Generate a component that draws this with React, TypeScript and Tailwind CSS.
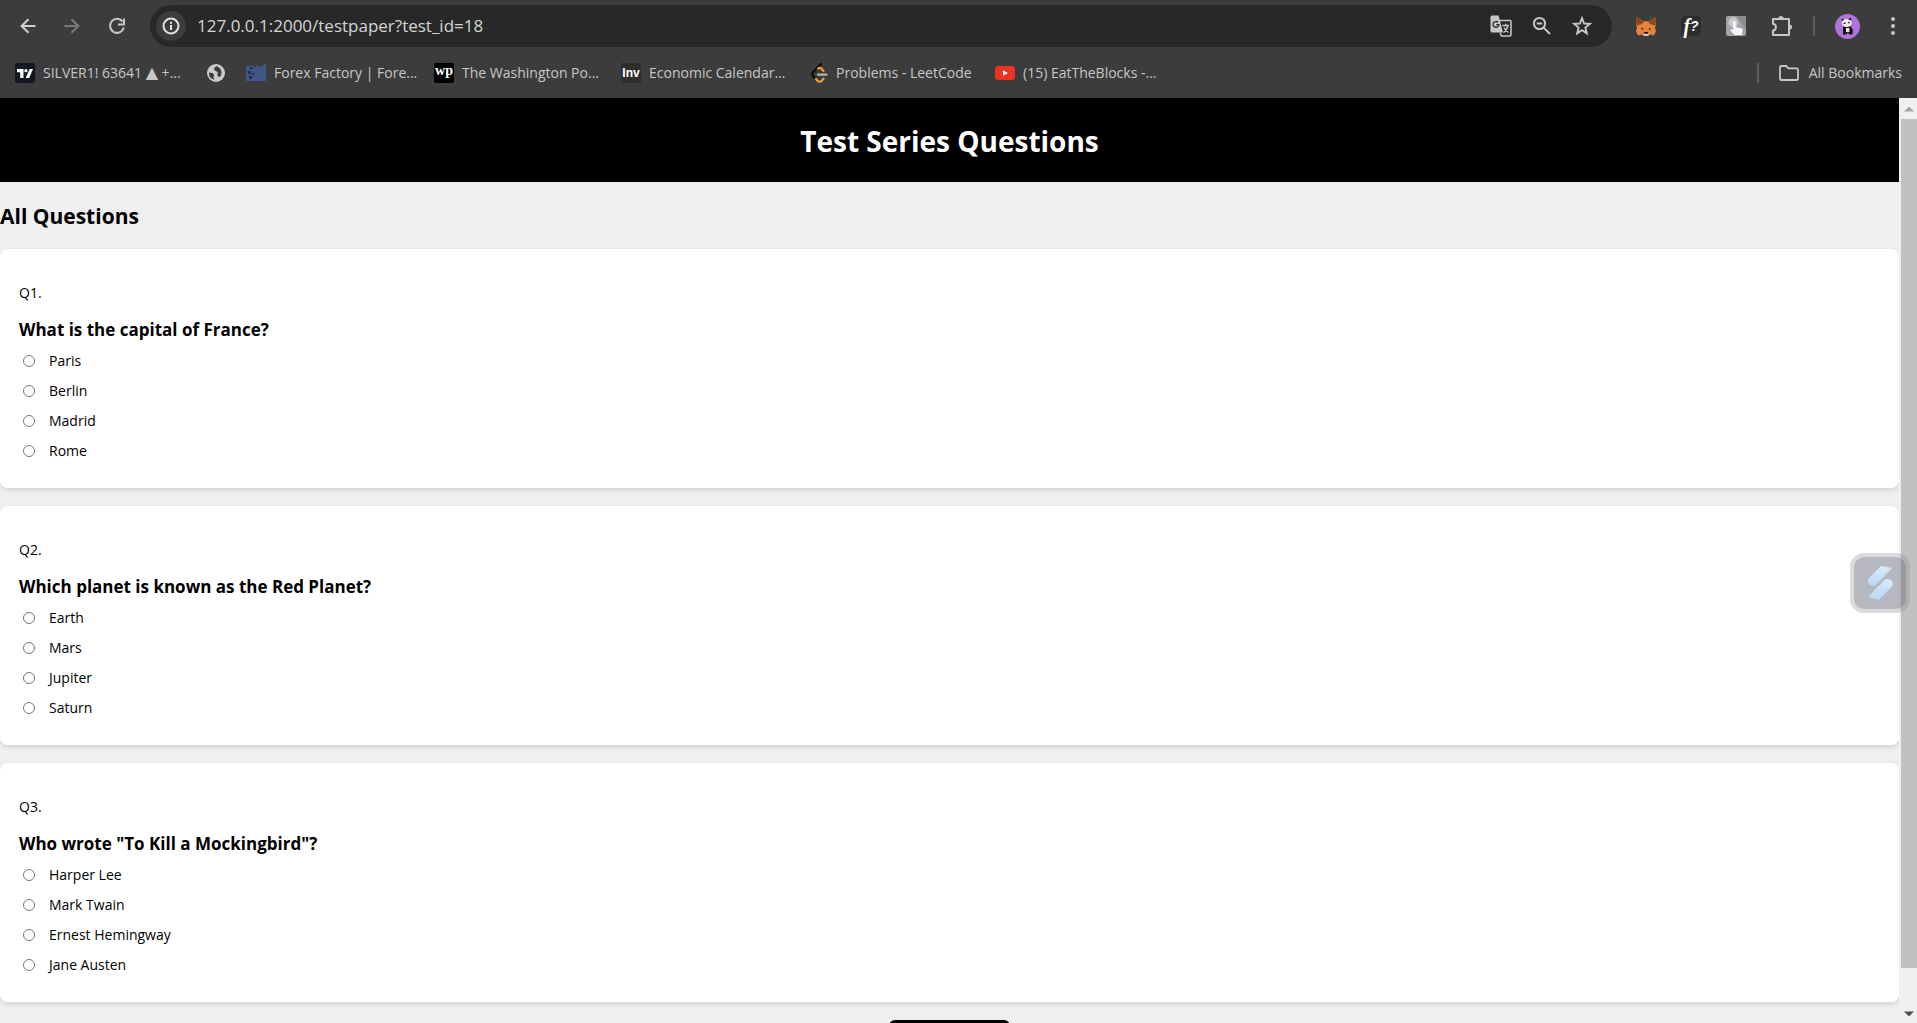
import React from "react";

const questions = [
  { text: "What is the capital of France?", options: ["Paris", "Berlin", "Madrid", "Rome"] },
  { text: "Which planet is known as the Red Planet?", options: ["Earth", "Mars", "Jupiter", "Saturn"] },
  {
    text: 'Who wrote "To Kill a Mockingbird"?',
    options: ["Harper Lee", "Mark Twain", "Ernest Hemingway", "Jane Austen"],
  },
];

const iconBase = { fill: "none", stroke: "currentColor", strokeWidth: 2 } as const;

function ArrowIcon({ flip }: { flip?: boolean }) {
  return (
    <svg width="16" height="16" viewBox="0 0 16 16" {...iconBase} className={flip ? "rotate-180" : ""}>
      <path d="M15.5 8H2M8.5 1.2 1.6 8l6.9 6.8" />
    </svg>
  );
}

function ReloadIcon() {
  return (
    <svg width="18" height="18" viewBox="0 0 18 18" {...iconBase}>
      <path d="M14.6 4.6A7 7 0 1 0 15.8 10.6" />
      <path d="M16 1.4v6h-6" />
    </svg>
  );
}

function InfoIcon() {
  return (
    <svg width="18" height="18" viewBox="0 0 18 18" {...iconBase}>
      <circle cx="9" cy="9" r="7.5" />
      <path d="M9 8v5M9 4.8v2" />
    </svg>
  );
}

function TranslateIcon() {
  return (
    <svg width="22" height="22" viewBox="0 0 22 22" fill="none">
      <path d="M9 5.500h11a1 1 0 0 1 1 1V20a1 1 0 0 1-1 1h-8.500l-1.500-3.500" stroke="#c7c7c7" strokeWidth="1.500" />
      <path d="M2 .5h6.600L13 17.500H2A1.500 1.500 0 0 1 .5 16V2A1.500 1.500 0 0 1 2 .5z" fill="#c7c7c7" />
      <path d="M8 7.300A2.900 2.900 0 1 0 8.900 9.600H6.200" stroke="#282828" strokeWidth="1.300" />
      <path d="M12.300 10.500H19M15.700 8.800v1.700M18 10.500c-.6 3-2.400 5.500-4.500 7M14 12.500c.8 2.200 2.500 4 4.500 5" stroke="#c7c7c7" strokeWidth="1.300" />
    </svg>
  );
}

function ZoomOutIcon() {
  return (
    <svg width="20" height="20" viewBox="0 0 20 20" {...iconBase}>
      <circle cx="7.500" cy="7.500" r="5.600" />
      <path d="M11.600 11.600 18 18M4.700 7.500h5.600" />
    </svg>
  );
}

function StarIcon() {
  return (
    <svg width="20" height="20" viewBox="0 0 20 20" {...iconBase} strokeWidth="1.900">
      <path d="m10 2.200 2.100 5.300 5.700.4-4.400 3.700 1.400 5.700-4.800-3.100-4.800 3.100 1.400-5.700L2.200 7.900l5.700-.4z" />
    </svg>
  );
}

function FoxIcon() {
  return (
    <svg width="20" height="19" viewBox="0 0 20 19">
      <path d="M0 0 7.500 4.200h5L20 0v6l-1 5 1 3-2 4.500-4-1-2 1.500H8l-2-1.500-4 1L0 14l1-3L0 6z" fill="#e8833a" />
      <path d="M0 0 8 4.500 6 7 1 8.500 0 5zM20 0l-8 4.500L14 7l5 1.500L20 5z" fill="#8a4b20" />
      <path d="M5 10.500 8 12l-2 1zM15 10.500 12 12l2 1z" fill="#2b3544" />
      <path d="M7.500 15.500h5l.6 2-1.600 1.500h-3l-1.600-1.500z" fill="#d9c7b8" />
      <path d="M8 15h4l.4 1.700H7.600z" fill="#1d1d1d" />
    </svg>
  );
}

function FunctionIcon() {
  return (
    <span className="flex size-5 items-center justify-center rounded-sm bg-[#2d2d2d] font-['Liberation_Serif',serif] text-xl leading-5 font-bold text-white italic">
      f<span className="font-['Liberation_Sans',sans-serif] text-sm leading-5">?</span>
    </span>
  );
}

function TouchIcon() {
  return (
    <svg width="20" height="20" viewBox="0 0 20 20">
      <rect width="20" height="20" rx="2" fill="#a3a3a3" />
      <path d="M10 0h8a2 2 0 0 1 2 2v12z" fill="#8d8d8d" />
      <circle cx="7.500" cy="6.500" r="5" fill="#c9c9c9" />
      <path d="M7 6.500a1.400 1.400 0 0 1 2.800 0V11l5.200 1.200c1.300.3 1.800 1 1.600 2.200L16 19H8.500L4 14.200c.5-1.500 1.800-1.300 3 0z" fill="#f1f6fc" />
    </svg>
  );
}

function PuzzleIcon() {
  return (
    <svg width="22" height="22" viewBox="0 0 22 22" {...iconBase}>
      <path d="M2 4h16v16H2v-4.400c3.800-.4 3.800-6.400 0-6.800z" strokeLinejoin="round" />
      <path d="M7.400 3.600a2.600 2.600 0 0 1 5.200 0zM18.400 9.400a2.600 2.600 0 0 1 0 5.200z" fill="currentColor" stroke="none" />
    </svg>
  );
}

function AvatarIcon() {
  return (
    <svg width="25" height="25" viewBox="0 0 25 25">
      <circle cx="12.500" cy="12.500" r="12.500" fill="#b073dc" />
      <path d="M8 12.500h8l2 4-.5 4h-3.500l-1-2.500-1.500 2.500H8z" fill="#151515" />
      <circle cx="7.800" cy="6" r="1.300" fill="#151515" />
      <circle cx="15" cy="5.300" r="1.300" fill="#151515" />
      <ellipse cx="11.700" cy="9" rx="5" ry="4" fill="#f2f2f2" />
      <path d="M8.500 9.700l2-1M13 8.500l2 .5" stroke="#151515" strokeWidth="1.200" />
      <rect x="11" y="14" width="3.400" height="4" fill="#e8e8e8" />
    </svg>
  );
}

function TradingViewIcon() {
  return (
    <svg width="20" height="20" viewBox="0 0 20 20">
      <rect width="20" height="20" rx="3" fill="#131722" />
      <path d="M2 6h6.500v9H5.200V9.300H2z" fill="#fff" />
      <circle cx="10.900" cy="7.700" r="1.600" fill="#fff" />
      <path d="M14.600 6H18l-3.800 9h-3.500z" fill="#fff" />
    </svg>
  );
}

function GlobeIcon() {
  return (
    <svg width="18" height="18" viewBox="0 0 18 18">
      <circle cx="9" cy="9" r="9" fill="#c9cacc" />
      <path d="M10 2.200C8 2.500 6.800 4 7.200 5.500c.4 1.800 3 1.500 3.500 3 .4 1.200-.7 2-.2 3.200.4.900 1.700.6 2.500 1.300A7 7 0 0 0 10 2.200zM2 8.500c2 .1 4.500.4 5 2 .4 1.300-.8 1.800-.5 3 .2.800.8 1.300.7 2.200A7 7 0 0 1 2 8.500z" fill="#3c3c3c" />
    </svg>
  );
}

function FactoryIcon() {
  return (
    <svg width="20" height="17" viewBox="0 0 20 17">
      <path d="M0 2h8v2l5-3v3l6-4h1v17H0z" fill="#3f5788" />
      <path d="M4 3h3v2H4zM2 7h3v3H2zM6 9h2v2H6zM3 12h3v3H3z" fill="#22314f" />
    </svg>
  );
}

function WapoIcon() {
  return (
    <span className="flex size-5 items-center justify-center overflow-hidden rounded-xs bg-black pb-1 font-['Liberation_Serif',serif] text-sm leading-5 font-bold text-white">
      wp
    </span>
  );
}

function InvIcon() {
  return (
    <span className="flex size-5 items-center justify-center bg-[#2e2e2e] font-['Liberation_Sans',sans-serif] text-xs leading-5 font-bold text-white">
      Inv
    </span>
  );
}

function LeetCodeIcon() {
  return (
    <svg width="18" height="20" viewBox="0 0 18 20" fill="none" strokeWidth="2.200" strokeLinecap="round">
      <path d="M11 1 3 9.300c-1 1-1 2.700 0 3.700l3 3" stroke="#0d0d0d" />
      <path d="M8 5.500c1-.8 2.500-.8 3.500.2L13.500 8M6 16l1.500 1.700c1.200 1.200 3 1.200 4.200 0l1.800-2" stroke="#f0a22e" />
      <path d="M8 11.700h8.500" stroke="#b5b5b5" />
    </svg>
  );
}

function YouTubeIcon() {
  return (
    <svg width="20" height="14" viewBox="0 0 20 14">
      <rect width="20" height="14" rx="3.500" fill="#ea3323" />
      <path d="M8 4.200v5.600L13 7z" fill="#fff" />
    </svg>
  );
}

function FolderIcon() {
  return (
    <svg width="20" height="16" viewBox="0 0 20 16" {...iconBase} strokeWidth="1.800">
      <path d="M1 2.200A1.200 1.200 0 0 1 2.200 1h5l2 2.300h8.600A1.200 1.200 0 0 1 19 4.500v9.300a1.200 1.200 0 0 1-1.200 1.200H2.200A1.200 1.200 0 0 1 1 13.800z" />
    </svg>
  );
}

const tickerLabel = (
  <>
    SILVER1! 63641 <span className="font-['DejaVu_Sans',sans-serif] text-base leading-5">▲</span> +...
  </>
);

const bookmarks = [
  { name: "Silver ticker", label: tickerLabel, icon: <TradingViewIcon />, width: "w-[172px]" },
  { name: "Website", label: null, icon: <GlobeIcon />, width: "w-[19px]" },
  { name: "Forex Factory", label: "Forex Factory | Fore...", icon: <FactoryIcon />, width: "w-[168px]" },
  { name: "The Washington Post", label: "The Washington Po...", icon: <WapoIcon />, width: "w-[167px]" },
  { name: "Economic Calendar", label: "Economic Calendar...", icon: <InvIcon />, width: "w-[169px]" },
  { name: "LeetCode", label: "Problems - LeetCode", icon: <LeetCodeIcon />, width: "w-[165px]" },
  { name: "EatTheBlocks", label: "(15) EatTheBlocks -...", icon: <YouTubeIcon />, width: "w-[167px]" },
];

function BrowserChrome() {
  return (
    <div className="flex h-[98px] shrink-0 flex-col bg-[#3c3c3c] pt-[5px] text-[#c7c7c7]">
      <div className="flex h-[42px] items-center">
        <div className="flex w-[150px] shrink-0 items-center gap-7 pl-5">
          <button type="button" aria-label="Back" className="text-[#d0d0d0]"><ArrowIcon /></button>
          <button type="button" aria-label="Forward" className="text-[#7c7c7c]"><ArrowIcon flip /></button>
          <button type="button" aria-label="Reload"><ReloadIcon /></button>
        </div>
        <div className="flex h-full min-w-0 flex-1 items-center rounded-full bg-[#282828] pr-[20px] pl-[6px]">
          <button type="button" aria-label="Site information" className="flex size-[30px] shrink-0 items-center justify-center rounded-full bg-[#3c3c3c] text-[#e3e3e3]">
            <InfoIcon />
          </button>
          <input
            aria-label="Address"
            defaultValue="127.0.0.1:2000/testpaper?test_id=18"
            className="ml-[11px] min-w-0 flex-1 bg-transparent text-[17px] text-[#d5d5d5] outline-none"
          />
          <div className="flex items-center gap-5">
            <button type="button" aria-label="Translate"><TranslateIcon /></button>
            <button type="button" aria-label="Zoom"><ZoomOutIcon /></button>
            <button type="button" aria-label="Bookmark this page"><StarIcon /></button>
          </div>
        </div>
        <div className="flex shrink-0 items-center gap-5 pr-[14px] pl-6">
          <div className="flex items-center gap-[25px]">
            <button type="button" aria-label="MetaMask"><FoxIcon /></button>
            <button type="button" aria-label="Formula finder"><FunctionIcon /></button>
            <button type="button" aria-label="Click helper"><TouchIcon /></button>
            <button type="button" aria-label="Extensions"><PuzzleIcon /></button>
          </div>
          <div className="h-5 w-[2px] bg-[#5c5c5c]" />
          <div className="flex items-center gap-[23px]">
            <button type="button" aria-label="Profile"><AvatarIcon /></button>
            <button type="button" aria-label="Menu" className="flex w-5 flex-col items-center gap-[3px]">
              <span className="size-1 rounded-full bg-[#c7c7c7]" />
              <span className="size-1 rounded-full bg-[#c7c7c7]" />
              <span className="size-1 rounded-full bg-[#c7c7c7]" />
            </button>
          </div>
        </div>
      </div>
      <div className="flex flex-1 items-center px-[15px] text-sm">
        <nav className="flex items-center gap-5">
          {bookmarks.map((b) => (
            <a key={b.name} href="#" aria-label={b.name} className={`flex shrink-0 items-center gap-2 whitespace-nowrap ${b.width}`}>
              <span className="shrink-0">{b.icon}</span>
              {b.label && <span>{b.label}</span>}
            </a>
          ))}
        </nav>
        <div className="ml-auto flex items-center">
          <div className="mr-5 h-5 w-[2px] bg-[#5c5c5c]" />
          <button type="button" className="flex items-center gap-[10px] whitespace-nowrap"><FolderIcon />All Bookmarks</button>
        </div>
      </div>
    </div>
  );
}

function QuestionCard({ index, text, options }: { index: number; text: string; options: string[] }) {
  return (
    <fieldset className="rounded-lg bg-white px-[19px] pt-8 pb-[22px] shadow-[0_2px_5px_rgba(0,0,0,0.12)]">
      <p className="text-sm leading-6">Q{index}.</p>
      <h3 className="mt-[13px] text-[17px] leading-6 font-bold">{text}</h3>
      <div className="mt-1">
        {options.map((o) => (
          <label key={o} className="flex h-[30px] items-center pl-1 text-sm">
            <input type="radio" name={`q${index}`} className="mr-[14px] size-3" />
            {o}
          </label>
        ))}
      </div>
    </fieldset>
  );
}

function Scrollbar() {
  return (
    <div aria-hidden className="flex w-[18px] shrink-0 flex-col bg-[#f0f0f0] pl-[2px]">
      <div className="flex h-[21px] items-center justify-center">
        <svg width="10" height="6" viewBox="0 0 10 6"><path d="M0 5.500 5 .5l5 5z" fill="#a3a3a3" /></svg>
      </div>
      <div className="flex-1 bg-[#c1c1c1]" />
      <div className="flex h-[55px] items-end justify-center pb-[6px]">
        <svg width="10" height="6" viewBox="0 0 10 6"><path d="M0 .5 5 5.500l5-5z" fill="#505050" /></svg>
      </div>
    </div>
  );
}

function FloatingButton() {
  return (
    <button
      type="button"
      aria-label="Assistant"
      className="fixed top-[553px] right-[7px] flex size-[60px] items-center justify-center rounded-[14px] border-4 border-[#8a8c98]/30 bg-[#70727f]/50 bg-clip-padding"
    >
      <svg width="26" height="34" viewBox="0 0 26 34">
        <defs>
          <linearGradient id="bolt" x1="0" y1="0" x2="0" y2="1">
            <stop offset="0" stopColor="#d9ebfb" />
            <stop offset="1" stopColor="#b9d7f6" />
          </linearGradient>
        </defs>
        <path d="M14 0 25 2 10 18c-2 2.300-6 2.500-8 .5s-1.500-5 .5-7z" fill="url(#bolt)" />
        <path d="M12 34 1 31l16-16.500c2-2 5.500-2 7.500 0s1.500 5-.5 7z" fill="url(#bolt)" />
      </svg>
    </button>
  );
}

export default function App() {
  return (
    <div className="flex h-screen flex-col overflow-hidden font-['Open_Sans','Noto_Sans',sans-serif] text-black">
      <BrowserChrome />
      <div className="flex min-h-0 flex-1">
        <main className="min-w-0 flex-1 overflow-hidden bg-[#efefef]">
          <header className="flex h-[84px] items-center justify-center bg-black pt-[2px]">
            <h1 className="text-[28px] font-bold text-white">Test Series Questions</h1>
          </header>
          <h2 className="pt-[18px] pb-[17px] text-[21px] leading-8 font-bold">All Questions</h2>
          <form className="flex flex-col gap-[18px]">
            {questions.map((q, i) => (
              <QuestionCard key={q.text} index={i + 1} text={q.text} options={q.options} />
            ))}
            <button type="submit" aria-label="Submit answers" className="mx-auto h-11 w-[121px] rounded-md bg-black" />
          </form>
        </main>
        <Scrollbar />
      </div>
      <FloatingButton />
    </div>
  );
}
